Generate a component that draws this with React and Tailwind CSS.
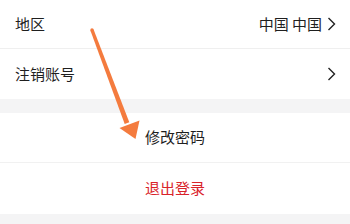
import React from "react";

const Chevron = () => (
  <svg width="9" height="14" viewBox="0 0 9 14" className="ml-[5px]">
    <path d="M1.5 1 L7.5 7 L1.5 13" fill="none" stroke="#222" strokeWidth="1.4" />
  </svg>
);

export default function App() {
  return (
    <div
      className="relative w-[350px] h-[224px] overflow-hidden bg-[#f4f4f5] text-[#1f1f1f] text-[15px]"
      style={{ fontFamily: '"Noto Sans CJK SC", "Noto Sans", sans-serif' }}
    >
      <div className="bg-white">
        <div className="h-[48px] flex items-center justify-between pl-[15px] pr-[14px]">
          <span>地区</span>
          <span className="flex items-center">
            中国 中国
            <Chevron />
          </span>
        </div>
        <div className="h-px bg-[#efefef]" />
        <div className="h-[50px] flex items-center justify-between pl-[15px] pr-[14px]">
          <span>注销账号</span>
          <Chevron />
        </div>
      </div>

      <div className="h-[14px]" />

      <div className="bg-white">
        <div className="h-[49px] flex items-center justify-center">
          <span>修改密码</span>
        </div>
        <div className="h-px bg-[#f1f1f1]" />
        <div className="h-[51px] flex items-center justify-center text-[#d9232a]">
          <span>退出登录</span>
        </div>
      </div>

      {/* orange annotation arrow */}
      <svg
        className="absolute left-0 top-0 pointer-events-none"
        width="350"
        height="224"
        viewBox="0 0 350 224"
      >
        <circle cx="92" cy="30" r="1.7" fill="#f47b3e" />
        <polygon points="93.6,29.4 129.3,122.2 124.7,123.9 90.4,30.6" fill="#f47b3e" />
        <polygon points="119.5,128 139.5,120.5 135.5,139" fill="#f47b3e" />
      </svg>
    </div>
  );
}
